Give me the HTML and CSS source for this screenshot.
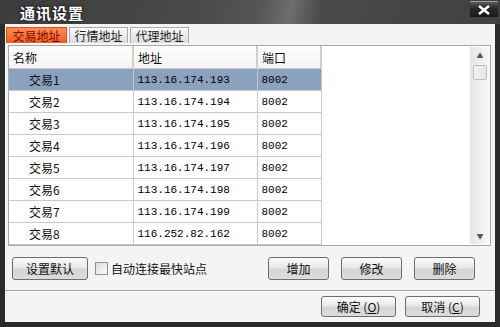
FILE: index.html
```html
<!DOCTYPE html>
<html lang="zh">
<head>
  <meta charset="UTF-8">
  <title>通讯设置</title>
  <link rel="stylesheet" href="styles.css">
</head>
<body>
  <div class="window">
    <div class="titlebar">
      <span class="title">通讯设置</span>
      <span class="close">
        <svg width="14" height="10" viewBox="0 0 14 10"><path d="M2 1 L12 9 M12 1 L2 9" stroke="#fff" stroke-width="2.4"/></svg>
      </span>
    </div>

    <div class="content">
      <div class="tabs">
        <span class="tab active">交易地址</span>
        <span class="tab">行情地址</span>
        <span class="tab">代理地址</span>
      </div>

      <div class="list">
        <table class="grid">
          <colgroup>
            <col class="c-name">
            <col class="c-addr">
            <col class="c-port">
          </colgroup>
          <thead>
            <tr><th>名称</th><th>地址</th><th>端口</th></tr>
          </thead>
          <tbody>
            <tr class="selected"><td class="name">交易1</td><td class="num">113.16.174.193</td><td class="num">8002</td></tr>
            <tr><td class="name">交易2</td><td class="num">113.16.174.194</td><td class="num">8002</td></tr>
            <tr><td class="name">交易3</td><td class="num">113.16.174.195</td><td class="num">8002</td></tr>
            <tr><td class="name">交易4</td><td class="num">113.16.174.196</td><td class="num">8002</td></tr>
            <tr><td class="name">交易5</td><td class="num">113.16.174.197</td><td class="num">8002</td></tr>
            <tr><td class="name">交易6</td><td class="num">113.16.174.198</td><td class="num">8002</td></tr>
            <tr><td class="name">交易7</td><td class="num">113.16.174.199</td><td class="num">8002</td></tr>
            <tr><td class="name">交易8</td><td class="num">116.252.82.162</td><td class="num">8002</td></tr>
          </tbody>
        </table>
        <div class="scrollbar">
          <span class="arrow">&#9650;</span>
          <span class="thumb"></span>
          <span class="track"></span>
          <span class="arrow">&#9660;</span>
        </div>
      </div>

      <div class="actions">
        <button type="button" class="btn wide">设置默认</button>
        <label class="check"><span class="box"></span>自动连接最快站点</label>
        <span class="spacer"></span>
        <button type="button" class="btn">增加</button>
        <button type="button" class="btn">修改</button>
        <button type="button" class="btn">删除</button>
      </div>

      <div class="separator"></div>

      <div class="footer">
        <button type="button" class="btn ok">确定 (<u>O</u>)</button>
        <button type="button" class="btn ok">取消 (<u>C</u>)</button>
      </div>
    </div>
  </div>
</body>
</html>
```

FILE: styles.css
```css
body {
  margin: 0;
  background: #fff;
  font-family: "Noto Sans CJK SC", "Noto Sans", sans-serif;
  font-size: 12px;
  color: #111;
}
.window {
  width: 500px;
  height: 327px;
  box-sizing: border-box;
  padding: 0 5px 5px 5px;
  background: #2a2a2a;
  display: flex;
  flex-direction: column;
}
.titlebar {
  height: 24px;
  display: flex;
  align-items: flex-start;
  justify-content: space-between;
  margin: 0 -5px;
  padding: 0 2px 0 20px;
  background: linear-gradient(100deg, #3c3c3c 0%, #4a4a4a 40%, #565656 52%, #6e6e6e 58%, #4a4a4a 64%, #404040 100%);
}
.title {
  margin-top: 2px;
  color: #fff;
  font-size: 15px;
  font-weight: bold;
  letter-spacing: 1px;
  text-shadow: 0 0 3px #000;
}
.close {
  width: 28px;
  height: 15px;
  margin-top: 1px;
  background: linear-gradient(#5a5a5a, #262626 45%, #1a1a1a);
  border-top: 1px solid #9a9a9a;
  display: flex;
  align-items: center;
  justify-content: center;
}
.content {
  flex: 1;
  background: #f4f4f4;
  display: flex;
  flex-direction: column;
}
.tabs {
  display: flex;
  gap: 2px;
  margin: 3px 0 0 1px;
  height: 16px;
}
.tab {
  width: 59px;
  height: 16px;
  box-sizing: border-box;
  border: 1px solid #aaa;
  border-bottom: none;
  background: linear-gradient(#fafafa, #dcdcdc);
  font-size: 12px;
  line-height: 15px;
  text-align: center;
  color: #222;
}
.tab.active {
  width: 61px;
  border-color: #e0501c;
  background: linear-gradient(#ff8a52, #f05a24);
  color: #7a1000;
}
.list {
  height: 201px;
  margin: 2px 4px 0 3px;
  box-sizing: border-box;
  border: 1px solid #a8a8a8;
  background: #fff;
  display: flex;
  justify-content: space-between;
}
.grid {
  width: 312px;
  table-layout: fixed;
  border-collapse: collapse;
  align-self: flex-start;
}
.c-name { width: 124px; }
.c-addr { width: 124px; }
.c-port { width: 64px; }
.grid th, .grid td {
  height: 21px;
  padding: 0 0 0 4px;
  border: 1px solid #c9c9c9;
  border-top: none;
  text-align: left;
  font-weight: normal;
  white-space: nowrap;
  overflow: hidden;
}
.grid th {
  height: 22px;
  background: linear-gradient(#fff, #f3f3f3);
  border-left: none;
  border-right: 2px solid #cfcfcf;
}
.grid th:first-child, .grid td:first-child {
  border-left: none;
}
.grid td.name {
  padding-left: 20px;
}
.grid td.num {
  font-family: "Liberation Mono", monospace;
  font-size: 11px;
  color: #000;
}
.grid tr.selected td {
  background: #8aa2be;
}
.scrollbar {
  width: 18px;
  margin: 1px 1px 1px 0;
  display: flex;
  flex-direction: column;
  align-items: center;
  background: linear-gradient(90deg, #e6e6e6, #f7f7f7);
  border-left: 1px solid #e0e0e0;
}
.arrow {
  font-size: 7px;
  color: #555;
  height: 16px;
  line-height: 16px;
}
.thumb {
  width: 14px;
  height: 15px;
  margin-top: 2px;
  box-sizing: border-box;
  border: 1px solid #bdbdbd;
  border-radius: 2px;
  background: linear-gradient(90deg, #f4f4f4, #e4e4e4);
}
.track {
  flex: 1;
}
.actions {
  display: flex;
  align-items: center;
  gap: 12px;
  margin: 11px 20px 0 7px;
  height: 23px;
}
.btn {
  width: 61px;
  height: 23px;
  padding: 0;
  border: 1px solid #6e6e6e;
  border-radius: 3px;
  background: linear-gradient(#fbfbfb, #e9e9e9 45%, #d6d6d6 55%, #dcdcdc);
  font-family: "Noto Sans CJK SC", "Noto Sans", sans-serif;
  font-size: 12px;
  color: #111;
}
.btn.wide {
  width: 76px;
  margin-right: -5px;
}
.check {
  display: flex;
  align-items: center;
  gap: 3px;
  font-size: 12px;
}
.box {
  width: 13px;
  height: 13px;
  box-sizing: border-box;
  border: 1px solid #8e8f8f;
  background: linear-gradient(135deg, #dcdcdc, #fafafa);
}
.spacer {
  flex: 1;
}
.separator {
  margin-top: 10px;
  height: 1px;
  background: #a0a0a0;
  border-bottom: 1px solid #fff;
}
.footer {
  display: flex;
  justify-content: flex-end;
  gap: 9px;
  margin: 4px 15px 0 0;
}
.btn.ok {
  width: 75px;
  height: 21px;
}
.btn u {
  text-decoration: underline;
}
```
